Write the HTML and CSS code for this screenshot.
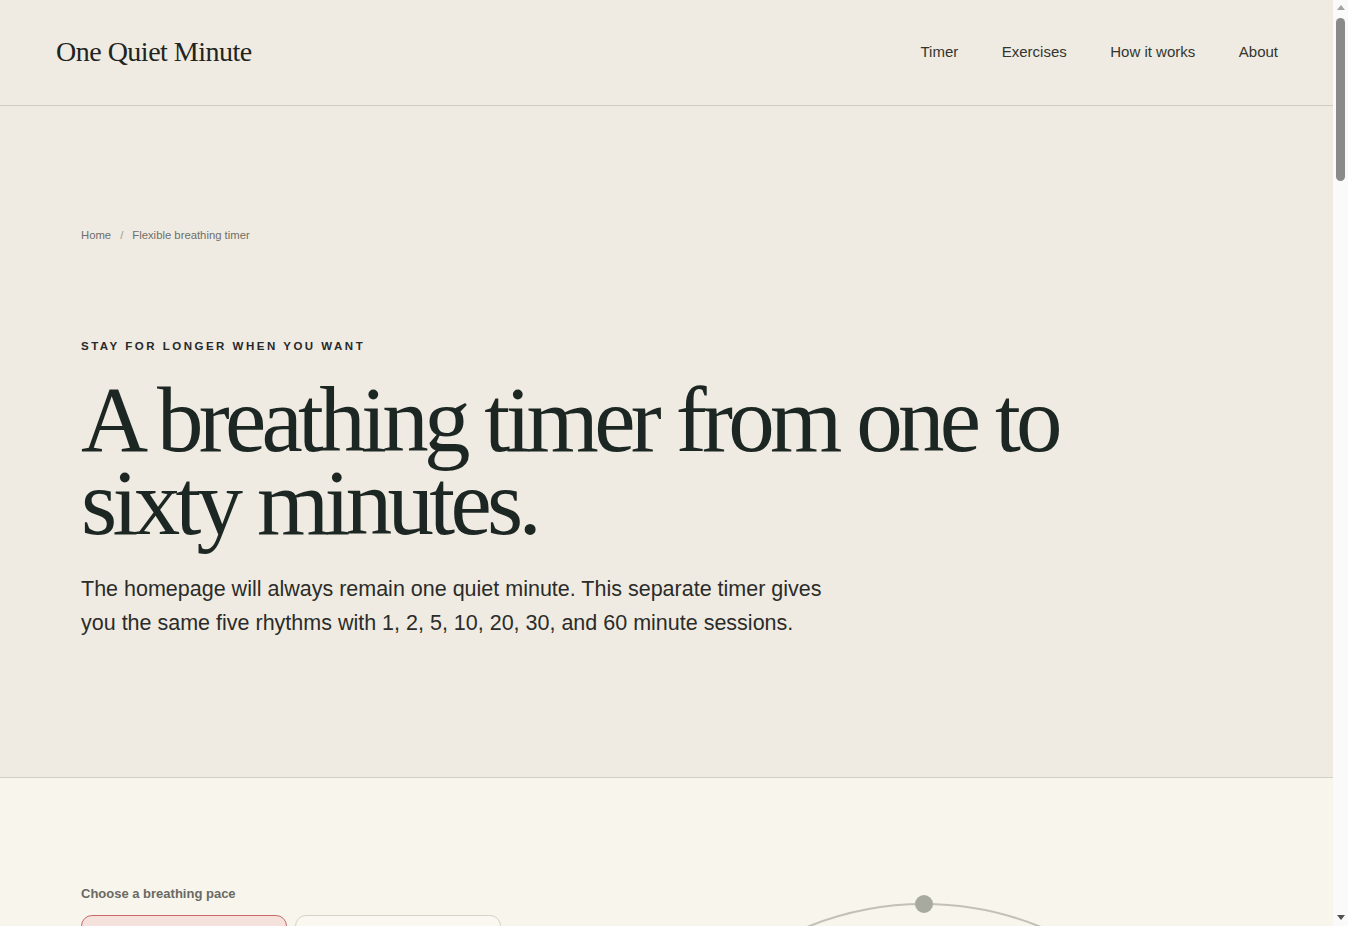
FILE: index.html
```html
<!DOCTYPE html>
<html lang="en">
<head>
<meta charset="utf-8">
<title>One Quiet Minute — Flexible breathing timer</title>
<link rel="stylesheet" href="styles.css">
</head>
<body>
<header class="site-header">
  <a class="logo" href="#">One Quiet Minute</a>
  <nav class="nav">
    <a href="#">Timer</a>
    <a href="#">Exercises</a>
    <a href="#">How it works</a>
    <a href="#">About</a>
  </nav>
</header>
<main>
  <section class="hero">
    <nav class="crumbs"><a href="#">Home</a><span class="sep">/</span><span>Flexible breathing timer</span></nav>
    <p class="eyebrow">Stay for longer when you want</p>
    <h1 class="title">A breathing timer from one to sixty minutes.</h1>
    <p class="lead">The homepage will always remain one quiet minute. This separate timer gives you the same five rhythms with 1, 2, 5, 10, 20, 30, and 60 minute sessions.</p>
  </section>
  <section class="timer">
    <div class="controls">
      <p class="label">Choose a breathing pace</p>
      <div class="paces">
        <button class="pace active">Box breathing</button>
        <button class="pace">Coherent</button>
      </div>
    </div>
    <div class="visual">
      <div class="ring"><span class="dot"></span></div>
    </div>
  </section>
</main>
<div class="scrollbar" aria-hidden="true">
  <span class="sb-up"></span>
  <span class="sb-thumb"></span>
  <span class="sb-down"></span>
</div>
</body>
</html>
```
FILE: styles.css
```css
* { box-sizing: border-box; }
html, body { padding: 0; }
html { margin: 0; background: #efebe2; }
body {
  margin: 0 15px 0 0;
  background: #efebe2;
  color: #1d2623;
  font-family: "Liberation Sans", Arial, sans-serif;
}
a { color: inherit; text-decoration: none; }

.site-header {
  height: 106px;
  display: flex;
  align-items: center;
  justify-content: space-between;
  padding: 0 55px 0 56px;
  border-bottom: 1px solid #cfcbc2;
}
.logo {
  font-family: "Liberation Serif", "Times New Roman", serif;
  font-size: 28px;
  letter-spacing: -0.5px;
  color: #1f2421;
  padding-bottom: 2px;
}
.nav {
  display: flex;
  gap: 43.5px;
  font-size: 15px;
  color: #33352f;
  padding-bottom: 2px;
}

.hero {
  padding: 123px 81px 0;
  height: 672px;
  border-bottom: 1px solid #d3cfc6;
}
.crumbs {
  font-size: 11.3px;
  color: #706f68;
  display: flex;
}
.crumbs .sep { margin: 0 9px; color: #9b998f; }
.eyebrow {
  margin: 99px 0 0;
  font-size: 11.5px;
  font-weight: 700;
  letter-spacing: 2.5px;
  text-transform: uppercase;
  color: #27292a;
}
.title {
  margin: 26px 0 0;
  font-family: "Liberation Serif", "Times New Roman", serif;
  font-weight: 400;
  font-size: 93px;
  line-height: 83px;
  letter-spacing: -4.7px;
  color: #1c2622;
  max-width: 1020px;
}
.lead {
  margin: 28px 0 0;
  font-size: 21.5px;
  line-height: 34px;
  color: #2b2c29;
  max-width: 760px;
}

.timer {
  background: #f8f5ec;
  min-height: 3800px;
  padding: 108px 81px 0;
  display: grid;
  grid-template-columns: minmax(0, 1fr) minmax(0, 1fr);
  gap: 40px;
}
.label {
  margin: 0;
  font-size: 13px;
  font-weight: 700;
  color: #6a6963;
}
.paces {
  margin-top: 14px;
  display: flex;
  gap: 8px;
}
.pace {
  width: 206px;
  height: 56px;
  border-radius: 11px;
  border: 1px solid #d6d2c6;
  background: #faf8f1;
  font-family: "Liberation Sans", Arial, sans-serif;
  font-size: 15px;
  color: #2a2a28;
}
.pace.active {
  background: #f5e2dc;
  border-color: #c9696a;
}
.visual {
  padding-top: 17px;
  padding-right: 90px;
  display: flex;
  justify-content: center;
}
.ring {
  position: relative;
  flex: none;
  width: 620px;
  height: 620px;
  border-radius: 50%;
  border: 2px solid #c3c0b5;
}
.dot {
  position: absolute;
  top: -10px;
  left: 50%;
  width: 18px;
  height: 18px;
  margin-left: -9px;
  border-radius: 50%;
  background: #a7ab9f;
}

/* simulated browser scrollbar overlay */
.scrollbar {
  position: fixed;
  top: 0;
  right: 0;
  bottom: 0;
  width: 15px;
  background: #fafafa;
  display: flex;
  flex-direction: column;
  align-items: center;
}
.sb-up, .sb-down {
  width: 0;
  height: 0;
  border-left: 4px solid transparent;
  border-right: 4px solid transparent;
}
.sb-up {
  margin-top: 5px;
  border-bottom: 5px solid #a3a3a3;
}
.sb-thumb {
  margin-top: 8px;
  width: 9px;
  height: 163px;
  border-radius: 5px;
  background: #8a8a8a;
}
.sb-down {
  margin-top: auto;
  margin-bottom: 6px;
  border-top: 5px solid #505050;
}
```
